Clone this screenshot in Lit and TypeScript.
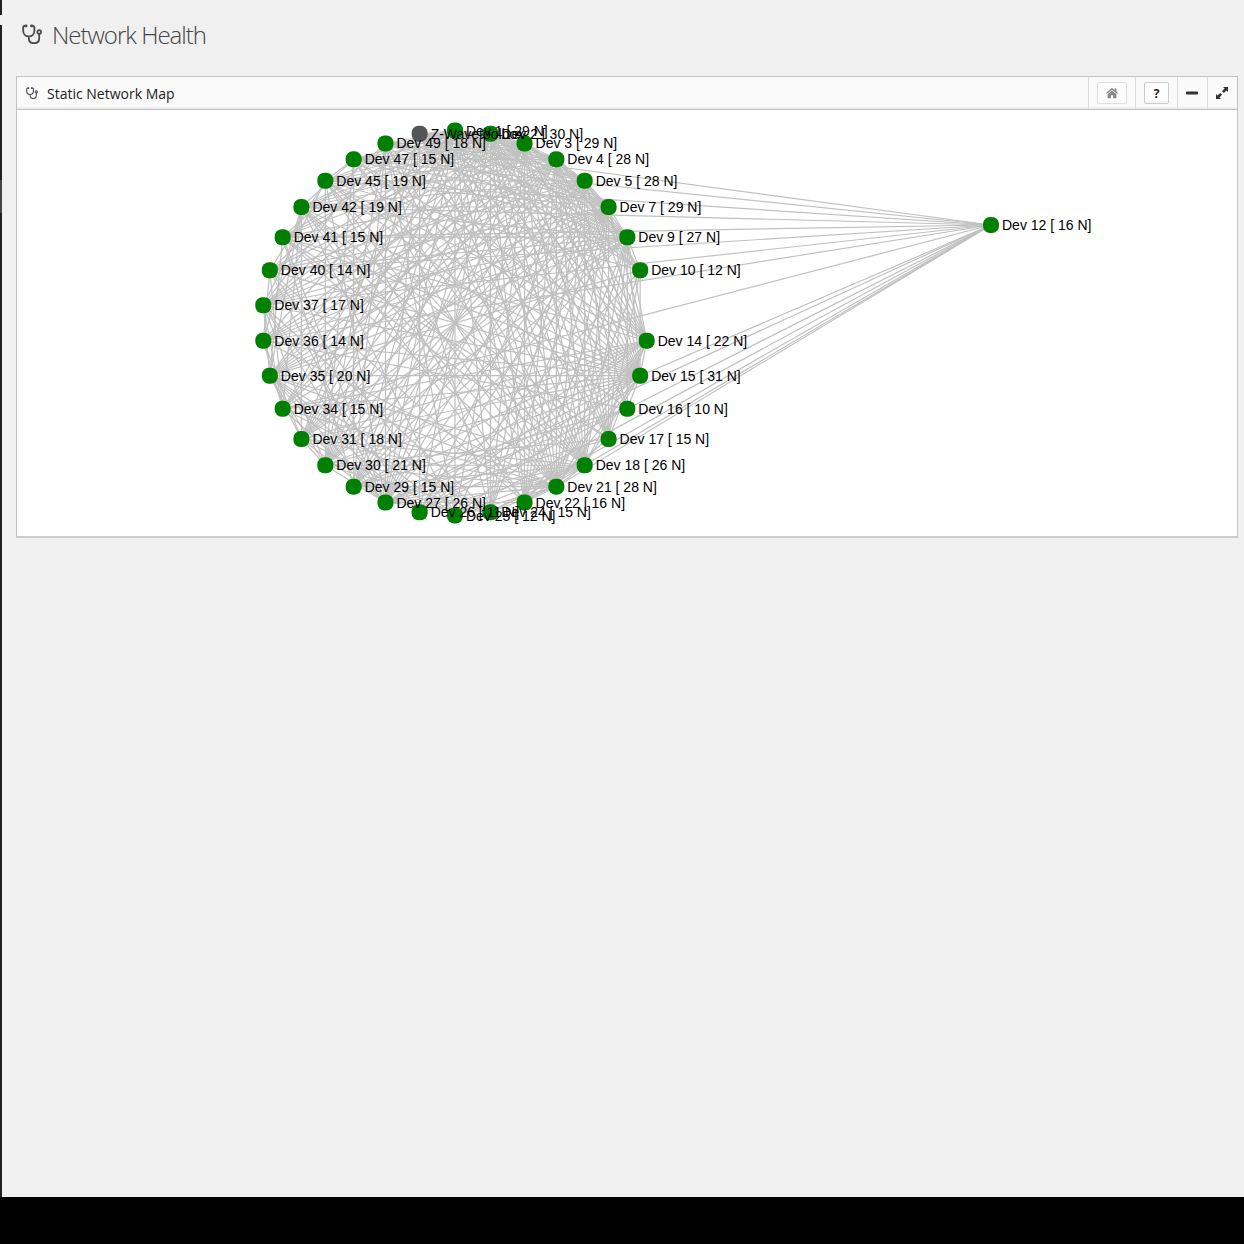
import { LitElement, html, svg, css } from "lit";
import { customElement } from "lit/decorators.js";

interface Device {
  label: string;
  neighbours: number;
}

const dev = (id: number, neighbours: number): Device => ({
  label: `Dev ${id} [ ${neighbours} N]`,
  neighbours,
});

const devices: Device[] = [
  dev(1, 29), dev(2, 30), dev(3, 29), dev(4, 28), dev(5, 28), dev(7, 29), dev(9, 27),
  dev(10, 12), dev(12, 16), dev(14, 22), dev(15, 31), dev(16, 10), dev(17, 15), dev(18, 26),
  dev(21, 28), dev(22, 16), dev(24, 15), dev(25, 12), dev(26, 11), dev(27, 26), dev(29, 15),
  dev(30, 21), dev(31, 18), dev(34, 15), dev(35, 20), dev(36, 14), dev(37, 17), dev(40, 14),
  dev(41, 15), dev(42, 19), dev(45, 19), dev(47, 15), dev(49, 18),
  { label: "Z-Wavetoolbox", neighbours: 18 },
];

const CENTER = { x: 438, y: 213 };
const RADIUS = 192.5;
const DETACHED = 8;
const DETACHED_LINKS = [32, 31, 30, 29, 28, 27, 26, 25, 23, 19, 17, 16, 14, 13, 11, 10];

const points = devices.map((_, i) => {
  if (i === DETACHED) return { x: 974, y: 115 };
  const angle = (i * 2 * Math.PI) / devices.length;
  return { x: CENTER.x + RADIUS * Math.sin(angle), y: CENTER.y - RADIUS * Math.cos(angle) };
});

// Pairs devices until every one has its reported number of neighbours.
function buildLinks(): [number, number][] {
  const left = devices.map((d) => d.neighbours);
  const links: [number, number][] = [];
  let seed = 12;
  const random = () => {
    seed = (seed * 1103515245 + 12345) % 2147483648;
    return seed / 2147483648;
  };
  for (const t of DETACHED_LINKS) {
    links.push([DETACHED, t]);
    left[t] -= 1;
  }
  left[DETACHED] = 0;
  const open = new Set(devices.map((_, i) => i).filter((i) => i !== DETACHED));
  while (open.size > 1) {
    const from = [...open].reduce((a, b) => (left[b] > left[a] ? b : a));
    open.delete(from);
    const targets = [...open]
      .filter((i) => left[i] > 0)
      .map((i) => ({ i, rank: left[i] + random() * 13 }))
      .sort((a, b) => b.rank - a.rank)
      .slice(0, Math.max(0, left[from]));
    for (const { i } of targets) {
      links.push([from, i]);
      left[i] -= 1;
    }
  }
  return links;
}

const links = buildLinks();

const stethoscope = html`<svg class="steth" viewBox="0 0 20 20" aria-hidden="true">
  <path d="M4 1.8H2.8Q1.2 1.8 1.2 3.4V6.8C1.2 10 3.6 12.4 6.8 12.4S12.4 10 12.4 6.8V3.4Q12.4 1.8 10.8 1.8H9.6M6.8 12.4V14.2C6.8 17.4 9 19.2 12 19.2S17.2 17.4 17.2 14.2V9.8" />
  <circle cx="17.2" cy="8" r="1.8" />
  <path class="tips" d="M3.6 1.9H4.2M9.4 1.9H10" />
</svg>`;

@customElement("network-map")
export class NetworkMap extends LitElement {
  static styles = css`
    :host { display: block; }
    .map { display: block; width: 100%; height: 426px; }
    .link { stroke: #c0c0c0; stroke-width: 1.2; }
    .node { fill: #008000; }
    .holder { fill: #555; }
    .label { font: 14px "Liberation Sans", Arial, sans-serif; fill: #000; }
  `;

  render() {
    return html`<svg class="map" role="img" aria-label="Static Network Map">
      ${links.map(([a, b]) => svg`<line class="link" x1=${points[a].x} y1=${points[a].y} x2=${points[b].x} y2=${points[b].y} />`)}
      ${points.map((p, i) => svg`<rect class=${i === devices.length - 1 ? "holder" : "node"} x=${p.x - 8} y=${p.y - 8} width="16" height="16" rx="7" />`)}
      ${points.map((p, i) => svg`<text class="label" x=${p.x + 11} y=${p.y + 5}>${devices[i].label}</text>`)}
    </svg>`;
  }
}

@customElement("app-root")
export class AppRoot extends LitElement {
  static styles = css`
    :host {
      display: flex;
      flex-direction: column;
      min-height: 100vh;
      box-sizing: border-box;
      background: #000;
      font-family: "Open Sans", sans-serif;
      color: #222;
    }
    .page { display: flex; flex: 1; margin-bottom: 47px; background: #f0f0f0; }
    .rail { display: flex; flex-direction: column; width: 2px; background: #231f20; }
    .rail-top { height: 15px; }
    .rail-gap { height: 10px; background: #f0f0f0; }
    .rail-items { height: 155px; }
    .rail-active { height: 33px; background: #444547; }
    .content { flex: 1; min-width: 0; padding: 0 6px 0 14px; }
    .title {
      display: flex;
      align-items: center;
      gap: 10px;
      height: 68px;
      margin: 0 0 8px;
      padding: 0 0 0 6px;
      font-size: 24px;
      font-weight: 300;
      letter-spacing: -1px;
      color: #444;
    }
    .steth { width: 20px; height: 20px; fill: none; stroke: #4a4a4a; stroke-width: 1.8; stroke-linecap: round; }
    .tips { stroke-width: 2.6; }
    .panel { border: 1px solid #c2c2c2; border-bottom-width: 2px; border-bottom-color: #ccc; background: #fff; }
    .bar {
      display: flex;
      align-items: stretch;
      height: 32px;
      border-bottom: 1px solid #c2c2c2;
      background: linear-gradient(#fafafa 30px, #eee 30px);
    }
    .name { display: flex; flex: 1; align-items: center; gap: 9px; margin: 0; padding-left: 9px; font-size: 14px; font-weight: 400; }
    .name .steth { width: 12px; height: 12px; }
    .tool { display: flex; align-items: center; justify-content: center; box-sizing: border-box; border-left: 1px solid #ddd; }
    .wide { width: 47px; }
    .mid { width: 42px; }
    .slim { width: 30px; padding-right: 2px; }
    button {
      display: flex;
      align-items: center;
      justify-content: center;
      box-sizing: border-box;
      width: 30px;
      height: 22px;
      padding: 0;
      border: 1px solid #ddd;
      border-radius: 2px;
      background: #fcfcfc;
      color: #222;
      font: 700 12px "Open Sans", sans-serif;
    }
    .help { width: 25px; border-color: #ccc; background: #fff; box-shadow: inset 0 -2px 0 #f4f4f4; }
    .plain { width: 27px; border: 0; background: none; }
    .glyph { width: 14px; height: 14px; fill: #333; }
    .muted { fill: #888; }
  `;

  render() {
    return html`
      <div class="page">
        <div class="rail">
          <div class="rail-top"></div>
          <div class="rail-gap"></div>
          <div class="rail-items"></div>
          <div class="rail-active"></div>
        </div>
        <main class="content">
          <h1 class="title">${stethoscope}<span>Network Health</span></h1>
          <section class="panel">
            <header class="bar">
              <h2 class="name">${stethoscope}<span>Static Network Map</span></h2>
              <div class="tool wide">
                <button aria-label="Home">
                  <svg class="glyph muted" viewBox="0 0 14 14"><path d="M7 1.8L1 7L1.8 8.1L7 3.7L12.2 8.1L13 7L11.4 5.6V2.4H9.6V4.1ZM7 4.5L2.6 8.2V12.2H5.9V9.2H8.1V12.2H11.4V8.2Z" /></svg>
                </button>
              </div>
              <div class="tool mid"><button class="help" aria-label="Help">?</button></div>
              <div class="tool slim">
                <button class="plain" aria-label="Collapse">
                  <svg class="glyph" viewBox="0 0 14 14"><rect x="1" y="5.5" width="12" height="3" rx="0.8" /></svg>
                </button>
              </div>
              <div class="tool slim">
                <button class="plain" aria-label="Full screen">
                  <svg class="glyph" viewBox="0 0 14 14"><path d="M8 1H13V6L11.4 4.4L8.8 7L7 5.2L9.6 2.6ZM6 13H1V8L2.6 9.6L5.2 7L7 8.8L4.4 11.4Z" /></svg>
                </button>
              </div>
            </header>
            <network-map></network-map>
          </section>
        </main>
      </div>
    `;
  }
}
